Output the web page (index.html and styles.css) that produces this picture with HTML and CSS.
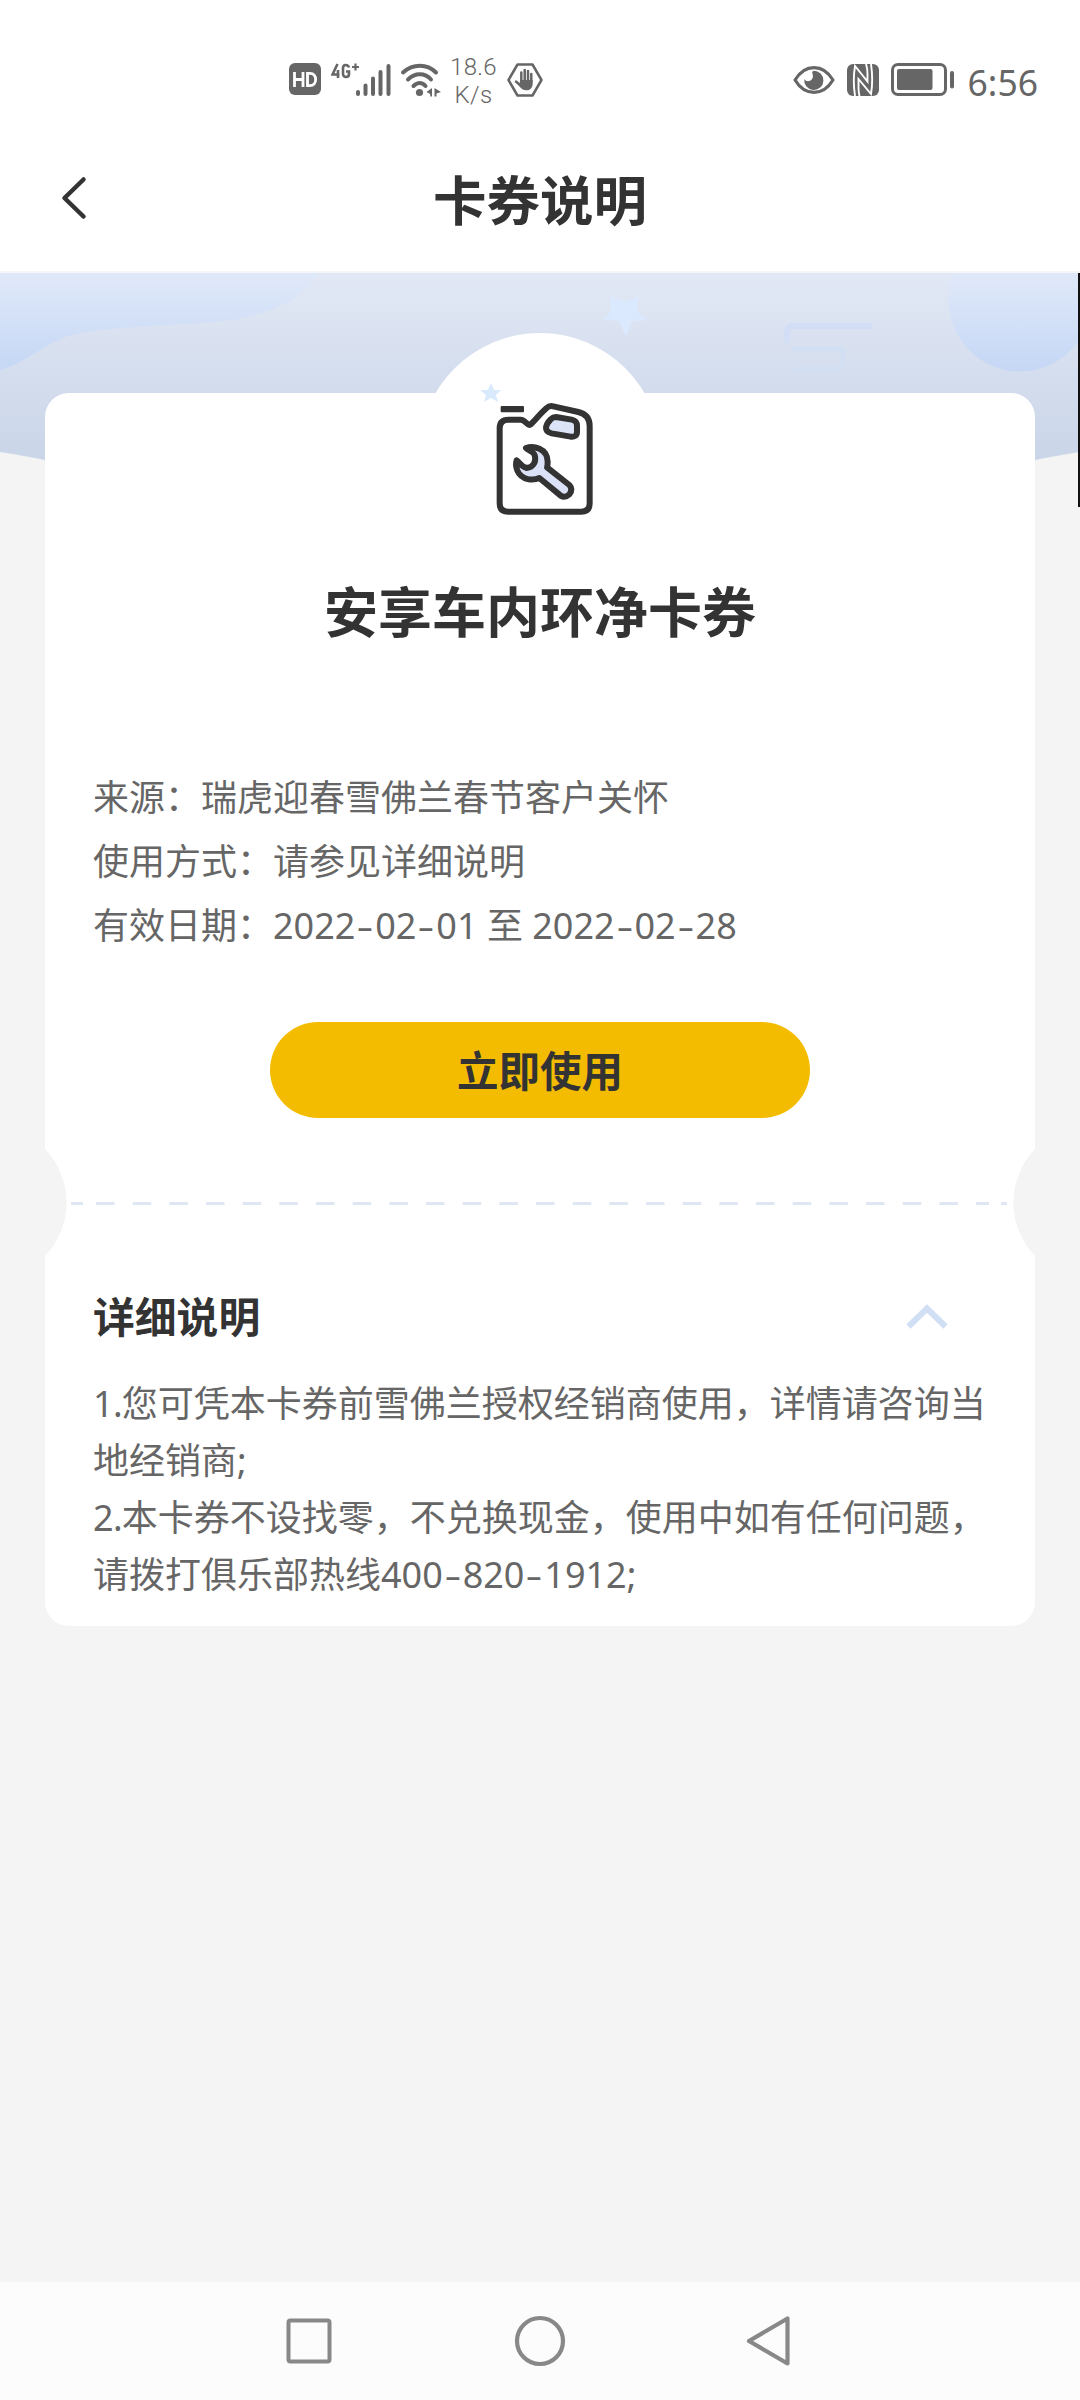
FILE: index.html
```html
<!DOCTYPE html>
<html lang="zh-CN">
<head>
<meta charset="utf-8">
<title>卡券说明</title>
<link rel="stylesheet" href="styles.css">
</head>
<body>
<div class="screen">
  <div class="status">
    <div class="status-left">
      <svg class="ico-hd" viewBox="0 0 32 32"><rect width="32" height="32" rx="6" fill="#666"/><path d="M5.500 9v15M14 9v15M5.500 16.500H14M18.500 10.300V22.700H21C28.500 22.700 28.500 10.300 21 10.300Z" fill="none" stroke="#fff" stroke-width="2.800"/></svg>
      <svg class="ico-signal" viewBox="0 0 60 34"><g fill="none" stroke="#666" stroke-width="2.600"><path d="M6.500 1L1.500 11.500H8.500M7 7V15"/><path d="M18 4.500C17 1 12 1 12 5V11C12 15 18 15 18 11V8.500H15"/><path d="M21 4H28M24.500 .5V7.500" stroke-width="2.200"/></g><g stroke="#666" stroke-width="4" stroke-linecap="round"><path d="M27 29v2M34.500 22.500V31M42 15.500V31M49.500 9V31M57.500 3V31"/></g></svg>
      <svg class="ico-wifi" viewBox="0 0 42 34"><g fill="none" stroke="#666" stroke-width="4" stroke-linecap="round"><path d="M3 9.500C13 .5 27 .5 36 9.500"/><path d="M8 16.500C15 9.500 25 9.500 31 16.500"/><path d="M13.500 23C17.500 19 22 19 25.500 23"/></g><circle cx="19.500" cy="29.500" r="3.600" fill="#666"/><path d="M32 25v8.500h-1.800v-2.500L26.500 29zM34.500 25l6.500 4-4.500 1.500v3h-2z" fill="#666"/></svg>
      <div class="speed"><span>18.6</span><span>K/s</span></div>
      <svg class="ico-hand" viewBox="0 0 36 34"><path d="M10.500 1.500H25.500L34.500 17L25.500 32.500H10.500L1.500 17Z" fill="none" stroke="#666" stroke-width="2.500" stroke-linejoin="round"/><g stroke="#666" stroke-width="2.500" stroke-linecap="round" fill="none"><path d="M14.300 19V9.500M17.700 18V7M21 18V8M24.300 19V11M9 18.500L14 23"/></g><path d="M13 17H25.600V21C25.600 29 15 29 12.500 23Z" fill="#666"/></svg>
    </div>
    <div class="status-right">
      <svg class="ico-eye" viewBox="0 0 42 28"><path d="M2 14C12 -2.500 30 -2.500 40 14C30 30.500 12 30.500 2 14Z" fill="none" stroke="#666" stroke-width="3.200" stroke-linejoin="round"/><path d="M20.500 4.800A9.600 9.600 0 1 1 11.300 13C14 17.500 21 14.500 19.800 9C19.500 7 18.500 6 20.500 4.800Z" fill="#666"/></svg>
      <svg class="ico-nfc" viewBox="0 0 32 32"><rect width="32" height="32" rx="6" fill="#666"/><path d="M8 32C6.500 22 6.500 11 8 2L20.500 17.500V10C20.500 6 20 3 19 0M24 0C25.500 10 25.500 21 24 30L11.500 15V23C11.500 27 12 30 12.500 32" fill="none" stroke="#fff" stroke-width="1.900"/></svg>
      <svg class="ico-battery" viewBox="0 0 64 34"><rect x="1.500" y="1.500" width="53" height="30" rx="5.500" fill="none" stroke="#666" stroke-width="3"/><rect x="6" y="6" width="35.500" height="21" rx="2" fill="#666"/><rect x="59" y="8" width="4" height="17.500" rx="2" fill="#666"/></svg>
      <span class="clock">6:56</span>
    </div>
  </div>

  <header class="header">
    <svg class="back" viewBox="0 0 26 44"><path d="M22.500 3.500L3.500 22L22.500 40.500" fill="none" stroke="#333" stroke-width="4.500" stroke-linecap="round" stroke-linejoin="round"/></svg>
    <h1 class="page-title">卡券说明</h1>
  </header>

  <main class="content">
    <svg class="backdrop" viewBox="0 273 1080 234">
      <defs>
        <linearGradient id="sky" x1="0" y1="273" x2="0" y2="460" gradientUnits="userSpaceOnUse"><stop offset="0" stop-color="#e2e8f5"/><stop offset="1" stop-color="#c9d5e8"/></linearGradient>
        <linearGradient id="cloud" x1="0" y1="273" x2="0" y2="371" gradientUnits="userSpaceOnUse"><stop offset="0" stop-color="#e0e9f9"/><stop offset="1" stop-color="#c5d7f5"/></linearGradient>
      </defs>
      <path d="M0 273H1080V452C1065 454 1050 457 1035 460H45C30 457 15 454 0 452Z" fill="url(#sky)"/>
      <path d="M0 273H320C309 286 303 293 292 300C275 310 250 318 223 321C175 326 110 326 72 335C48 341 25 364 0 370Z" fill="url(#cloud)"/>
      <circle cx="1020" cy="300" r="71.500" fill="url(#cloud)"/>
      <path d="M610 296L625 302L639 296L637 312L648 320L632 321L626 337L619 321L603 319L611 312Z" fill="#dbe9fe"/>
      <g fill="none" stroke="#d2def6" stroke-width="6"><path d="M872 326H793Q787 326 787 333V343"/><path d="M792 349H843V366Q843 369 838 369H795" stroke="#d2dff3" stroke-width="5"/></g>
      <path d="M1078 273H1080V507H1078Z" fill="#111"/>
    </svg>

    <section class="card coupon">
      <div class="dome">
        <svg class="dome-art" viewBox="430 333 220 190">
          <path d="M491 383L494 390L501 390L496 395L498 402L491 398L484 402L486 395L480 390L488 390Z" fill="#d9eafd"/>
          <g transform="translate(400 320) scale(.33333)" stroke-linejoin="round">
            <rect x="302" y="258" width="70" height="19" rx="3" fill="#333"/>
            <g stroke="#333" stroke-width="18">
              <path d="M299 325Q299 299 325 299H362C376 299 378 314 389 315C398 310 415 286 440 264Q448 256 460 259L535 276Q569 284 569 318V550Q569 575 544 575H324Q299 575 299 550Z" fill="#fff"/>
              <path d="M468 291L515 299Q531 302 531 318V335Q531 352 512 350L455 340Q437 336 438 322Q440 310 452 298Q459 291 468 291Z" fill="#dbe5f7"/>
              <path d="M378 384C400 376 442 385 443 425Q443 437 441 442L508 495Q520 508 508 523Q495 535 482 527L418 474C400 482 365 482 352 452Q345 435 350 421C358 425 362 440 380 444C400 442 410 425 404 405C400 395 385 392 378 384Z" fill="#dbe2f7"/>
            </g>
          </g>
        </svg>
      </div>
      <h2 class="coupon-name">安享车内环净卡券</h2>
      <div class="facts">
        <p>来源：瑞虎迎春雪佛兰春节客户关怀</p>
        <p>使用方式：请参见详细说明</p>
        <p>有效日期：2022<i>-</i>02<i>-</i>01 至 2022<i>-</i>02<i>-</i>28</p>
      </div>
      <button class="use" type="button">立即使用</button>
      <svg class="tear" viewBox="45 1140 990 125">
        <path d="M45 1149A77 77 0 0 1 45 1256ZM1035 1149A77 77 0 0 0 1035 1256Z" fill="#f4f4f4"/>
        <g stroke="#dfe6f4" stroke-width="3"><path d="M71 1203.500H83M976 1203.500H989M1001 1203.500H1007"/><path d="M96 1203.500H960" stroke-dasharray="18.500 18.170"/></g>
      </svg>
      <div class="detail-head">
        <h3>详细说明</h3>
        <svg class="chevron" viewBox="0 0 42 26"><path d="M2.500 22.500L21 4.500L39.500 22.500" fill="none" stroke="#d1dff5" stroke-width="6"/></svg>
      </div>
      <div class="detail">
        <p><b>1.</b>您可凭本卡券前雪佛兰授权经销商使用，详情请咨询当<br>地经销商;</p>
        <p><b>2.</b>本卡券不设找零，不兑换现金，使用中如有任何问题，<br>请拨打俱乐部热线400<i>-</i>820<i>-</i>1912;</p>
      </div>
    </section>
  </main>

  <nav class="navbar">
    <svg viewBox="0 0 54 54"><rect x="6.500" y="6.500" width="41" height="41" rx="2" fill="none" stroke="#888" stroke-width="4"/></svg>
    <svg viewBox="0 0 54 54"><circle cx="27" cy="27" r="23" fill="none" stroke="#888" stroke-width="4.200"/></svg>
    <svg viewBox="0 0 54 54"><path d="M43.500 4.500V49.500L5 27Z" fill="none" stroke="#888" stroke-width="4.200" stroke-linejoin="round"/></svg>
  </nav>
</div>
</body>
</html>
```
FILE: styles.css
```css
* { box-sizing: border-box; }
body { margin: 0; background: #fff; }
h1, h2, h3, p { margin: 0; }
svg { display: block; flex: none; }

.screen {
  width: 1080px;
  height: 2400px;
  display: flex;
  flex-direction: column;
  overflow: hidden;
  font-family: "Noto Sans", "Noto Sans CJK SC", sans-serif;
  color: #666;
}

.status {
  height: 112px;
  padding: 48px 42px 0 289px;
  display: flex;
  justify-content: space-between;
}
.status-left, .status-right { display: flex; height: 64px; align-items: flex-start; }
.ico-hd { width: 32px; height: 32px; }
.ico-signal { width: 60px; height: 34px; margin-left: 10px; }
.ico-wifi { width: 42px; height: 34px; margin-left: 9px; }
.ico-hand { width: 36px; height: 34px; margin-left: 10px; }
.status-left > svg { margin-top: 15px; }
.speed {
  width: 47px;
  margin-left: 8px;
  margin-top: 5px;
  display: flex;
  flex-direction: column;
  align-items: center;
  font: 300 24px/28px Roboto, sans-serif;
  letter-spacing: .3px;
}
.ico-eye { width: 42px; height: 28px; margin-top: 18px; }
.ico-nfc { width: 32px; height: 32px; margin: 16px 0 0 12px; }
.ico-battery { width: 64px; height: 34px; margin: 15px 0 0 12px; }
.clock {
  margin: 14px 0 0 13px;
  font: 35.5px/40px "Noto Sans", sans-serif;
}

.header {
  height: 161px;
  padding: 0 59px 0 61px;
  display: grid;
  grid-template-columns: 26px 1fr 26px;
  align-items: start;
  border-bottom: 2px solid #f3f5f9;
}
.back { width: 26px; height: 44px; margin-top: 64px; }
.page-title {
  margin: 49px 2px 0 0;
  text-align: center;
  font-size: 53.5px;
  line-height: 80px;
  font-weight: 700;
  color: #333;
}

.content { flex: 1; position: relative; background: #f4f4f4; padding: 120px 45px 0; }
.backdrop { position: absolute; left: 0; top: 0; width: 1080px; height: 234px; }
.card { position: relative; height: 1233px; background: #fff; border-radius: 24px; }
.coupon { display: flex; flex-direction: column; padding-top: 179px; }
.dome {
  position: absolute;
  left: 50%;
  top: -60px;
  width: 242px;
  height: 242px;
  margin-left: -121px;
  border-radius: 50%;
  background: #fff;
}
.dome-art { width: 220px; height: 190px; margin: 0 11px; }
.coupon-name {
  position: relative;
  text-align: center;
  font-size: 54px;
  line-height: 80px;
  font-weight: 700;
  color: #333;
}
.facts { margin-top: 114px; padding-left: 48px; font-size: 36px; line-height: 64px; white-space: nowrap; }
i { display: inline-block; width: 19.9px; text-align: center; font-style: normal; transform: scaleX(1.45); }
b { font-weight: 400; letter-spacing: -.7px; }
.use {
  align-self: center;
  width: 540px;
  height: 96px;
  margin-top: 64px;
  padding: 2px 0 0;
  border: 0;
  border-radius: 48px;
  background: #f3bc00;
  color: #333;
  font: 700 41.5px/94px "Noto Sans", "Noto Sans CJK SC", sans-serif;
}
.tear { width: 990px; height: 125px; margin-top: 22px; }
.detail-head {
  margin-top: 22px;
  height: 60px;
  padding: 0 87px 0 48px;
  display: flex;
  justify-content: space-between;
  align-items: center;
}
.detail-head h3 { font-size: 41.8px; line-height: 60px; font-weight: 700; color: #333; }
.chevron { width: 42px; height: 26px; }
.detail { margin-top: 28px; padding-left: 48px; font-size: 36px; line-height: 57px; white-space: nowrap; }

.navbar {
  height: 118px;
  padding: 0 282px 0;
  display: flex;
  justify-content: space-between;
  align-items: center;
  background: #fcfcfc;
}
.navbar svg { width: 54px; height: 54px; }
```
